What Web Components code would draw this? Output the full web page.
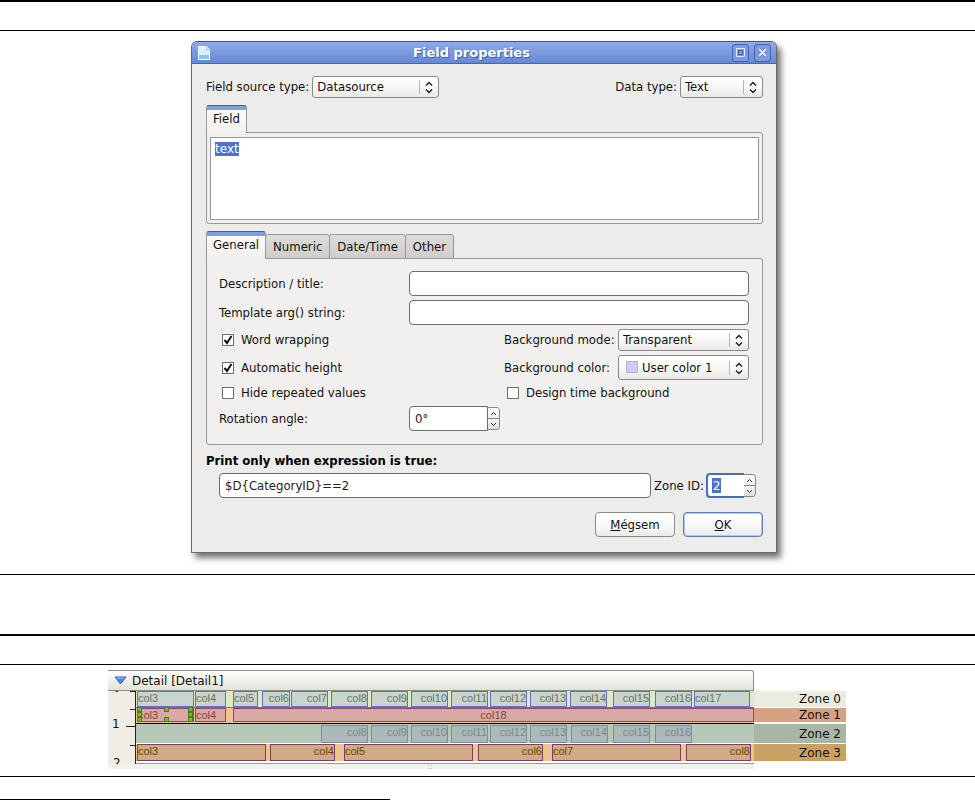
<!DOCTYPE html>
<html lang="en">
<head>
<meta charset="utf-8">
<title>Field properties</title>
<style>
	body {
		margin: 0;
		background: #fff;
		color: #111;
		font: 13px/16px "DejaVu Sans Condensed", "DejaVu Sans", sans-serif;
	}
	hr { width: 40%; height: 1px; margin: 22px 0 0; border: 0; background: #000; }
	doc-figure + doc-figure { margin-top: 59px; }
</style>
</head>
<body>
	<doc-figure><field-dialog></field-dialog></doc-figure>
	<doc-figure class="report"><report-band></report-band></doc-figure>
	<hr>

<script>
	/* Shared base: puts the markup of the class into an open shadow root */
	class BaseElement extends HTMLElement {
		connectedCallback() {
			if (this.shadowRoot) return;
			this.attachShadow({ mode: 'open' });
			this.shadowRoot.innerHTML = this.template();
			this.ready();
		}
		attr(name, def = '') { return this.getAttribute(name) ?? def; }
		ready() {}
	}

	// --- Figure between two rules ---
	class DocFigure extends BaseElement {
		template() {
			return `
				<style>
					:host { display: block; border-top: 2px solid #000; border-bottom: 1px solid #000; }
					.head { height: 28px; border-bottom: 1px solid #000; }
					.body { display: flex; justify-content: center; padding: 10px 7px 21px 0; }
					:host(.report) .body { padding: 5px 21px 7px 0; }
				</style>
				<div class="head"></div>
				<div class="body"><slot></slot></div>
			`;
		}
	}
	customElements.define('doc-figure', DocFigure);

	// --- Drop-down with its label ---
	class FieldSelect extends BaseElement {
		template() {
			const swatch = this.hasAttribute('swatch');
			return `
				<style>
					:host { display: flex; align-items: center; gap: 3px; }
					label { flex: 1 0 auto; white-space: nowrap; }
					.box { position: relative; display: flex; width: var(--select-width, 131px); }
					select {
						appearance: none;
						box-sizing: border-box;
						width: 100%;
						height: 22px;
						padding: 0 24px 0 4px;
						border: 1px solid #8c8a86;
						border-radius: 3px;
						background: linear-gradient(#fff, #f8f8f7 50%, #e9e8e6);
						font: inherit;
						color: inherit;
						outline: none;
					}
					:host([swatch]) select { height: 25px; padding-left: 23px; }
					svg { position: absolute; right: 0; top: 50%; margin-top: -11px; pointer-events: none; }
					.swatch {
						position: absolute;
						left: 8px;
						top: 6px;
						width: 12px;
						height: 12px;
						box-sizing: border-box;
						border: 1px solid #b4b4c8;
						background: #ccccfa;
						pointer-events: none;
					}
				</style>
				<label for="ctl">${this.attr('label')}</label>
				<div class="box">
					<select id="ctl"><option>${this.attr('value')}</option></select>
					${swatch ? '<span class="swatch"></span>' : ''}
					<svg width="20" height="22" viewBox="0 0 20 22" fill="none">
						<path d="M.5 4v14" stroke="#b8b6b2"/>
						<path d="M7 9.500l3-3 3 3M7 13.500l3 3 3-3" stroke="#222" stroke-width="1.500"/>
					</svg>
				</div>
			`;
		}
	}
	customElements.define('field-select', FieldSelect);

	// --- Text box with its label ---
	class FieldText extends BaseElement {
		template() {
			return `
				<style>
					:host { display: flex; align-items: center; }
					label { flex: none; width: 190px; white-space: nowrap; }
					:host([bare]) label { display: none; }
					input {
						flex: 1;
						min-width: 0;
						height: 25px;
						box-sizing: border-box;
						padding: 0 5px;
						border: 1px solid #6f6d6a;
						border-radius: 4px;
						background: #fff;
						font: inherit;
						color: #222;
						outline: none;
					}
				</style>
				<label for="ctl">${this.attr('label')}</label>
				<input id="ctl" type="text" value="${this.attr('value')}">
			`;
		}
	}
	customElements.define('field-text', FieldText);

	// --- Tick box ---
	class FieldCheck extends BaseElement {
		template() {
			return `
				<style>
					:host { display: flex; }
					label { display: flex; align-items: center; gap: 7px; padding-left: 3px; white-space: nowrap; }
					.box { display: grid; }
					.box > * { grid-area: 1 / 1; }
					input {
						appearance: none;
						width: 12px;
						height: 12px;
						box-sizing: border-box;
						margin: 0;
						border: 1px solid #6f6d6a;
						background: #fff;
					}
					svg { visibility: hidden; pointer-events: none; }
					input:checked + svg { visibility: visible; }
				</style>
				<label>
					<span class="box">
						<input type="checkbox" ${this.hasAttribute('checked') ? 'checked' : ''}>
						<svg width="12" height="12" viewBox="0 0 12 12"><path d="M2.500 6l2.500 3 4.500-7" fill="none" stroke="#111" stroke-width="2"/></svg>
					</span>
					<span><slot></slot></span>
				</label>
			`;
		}
	}
	customElements.define('field-check', FieldCheck);

	// --- Number box with up / down buttons ---
	class FieldSpin extends BaseElement {
		template() {
			return `
				<style>
					:host { display: flex; align-items: center; }
					label { flex: none; width: var(--label-width, 190px); white-space: nowrap; }
					input {
						width: var(--spin-width, 79px);
						height: 25px;
						box-sizing: border-box;
						padding: 0 5px;
						border: 1px solid #6f6d6a;
						border-radius: 4px 0 0 4px;
						background: #fff;
						font: inherit;
						color: #222;
						outline: none;
					}
					:host([selected]) input {
						border: 2px solid #4a6fb8;
						border-right-width: 0;
						color: #fff;
						background: linear-gradient(#4a74cc, #4a74cc) 4px 3px / 9px 15px no-repeat #fff;
					}
					.buttons {
						display: grid;
						width: 12px;
						height: 23px;
						box-sizing: border-box;
						border: 1px solid #8c8a86;
						border-left: 0;
						border-radius: 0 4px 4px 0;
						overflow: hidden;
					}
					button {
						display: grid;
						place-items: center;
						padding: 0;
						border: 0;
						background: linear-gradient(#fff, #ececea);
					}
					button + button { border-top: 1px solid #8c8a86; background: linear-gradient(#f4f4f2, #dddcd9); }
				</style>
				<label for="ctl">${this.attr('label')}</label>
				<input id="ctl" type="text" value="${this.attr('value')}">
				<div class="buttons">
					<button aria-label="Up"><svg width="7" height="5" viewBox="0 0 7 5"><path d="M1 4l2.500-2.500 2.500 2.500" fill="none" stroke="#333"/></svg></button>
					<button aria-label="Down"><svg width="7" height="5" viewBox="0 0 7 5"><path d="M1 1l2.500 2.500 2.500-2.500" fill="none" stroke="#333"/></svg></button>
				</div>
			`;
		}
		ready() {
			const input = this.shadowRoot.querySelector('input');
			const [up, down] = this.shadowRoot.querySelectorAll('button');
			const unit = this.attr('unit');
			const step = n => input.value = (parseInt(input.value) || 0) + n + unit;
			up.addEventListener('click', () => step(1));
			down.addEventListener('click', () => step(-1));
		}
	}
	customElements.define('field-spin', FieldSpin);

	// --- Tabs over one panel, tabs="A,B,C" ---
	class TabPanel extends BaseElement {
		template() {
			const tabs = this.attr('tabs').split(',');
			return `
				<style>
					:host { display: block; }
					.tabs { display: flex; align-items: flex-end; margin-bottom: -1px; position: relative; }
					button {
						height: 25px;
						box-sizing: border-box;
						margin-left: -1px;
						padding: 0 7px;
						border: 1px solid #9a9894;
						border-radius: 3px 3px 0 0;
						background: linear-gradient(#dddcda, #cfcecb);
						font: inherit;
						color: inherit;
					}
					button:first-child { margin-left: 0; }
					button[aria-selected=true] {
						height: 28px;
						padding: 0 6px 2px;
						border-top: 1px solid #3d5ea6;
						border-bottom: 0;
						background: linear-gradient(#7f9fe0 0 4px, #fbfbfa 4px, #f1f0ee);
					}
					.panel { border: 1px solid #9a9894; border-radius: 0 3px 3px 3px; background: #f1f0ee; }
				</style>
				<div class="tabs" role="tablist">
					${tabs.map((t, i) => `<button role="tab" aria-selected="${i === 0}">${t}</button>`).join('')}
				</div>
				<div class="panel" role="tabpanel"><slot></slot></div>
			`;
		}
		ready() {
			const tabs = this.shadowRoot.querySelectorAll('button');
			tabs.forEach(tab => tab.addEventListener('click', () => {
				tabs.forEach(t => t.setAttribute('aria-selected', t === tab));
			}));
		}
	}
	customElements.define('tab-panel', TabPanel);

	// --- Push button ---
	class PushButton extends BaseElement {
		template() {
			return `
				<style>
					:host { display: block; }
					button {
						width: 80px;
						height: 25px;
						box-sizing: border-box;
						padding: 0;
						border: 1px solid #8c8a86;
						border-radius: 4px;
						background: linear-gradient(#fff, #f9f9f8 50%, #eaeae8);
						font: inherit;
						color: inherit;
					}
					:host([default]) button { border-color: #5f80c0; box-shadow: inset 0 0 0 1px #b4c6ea; }
				</style>
				<button><slot></slot></button>
			`;
		}
	}
	customElements.define('push-button', PushButton);

	// --- The dialog window ---
	class FieldDialog extends BaseElement {
		template() {
			return `
				<style>
					:host {
						display: block;
						flex: 0 1 586px;
						box-sizing: border-box;
						border: 1px solid #66686c;
						border-top-color: #3b5690;
						border-radius: 6px 6px 0 0;
						background: #ececeb;
						box-shadow: 4px 5px 6px rgba(0, 0, 0, .55);
					}
					header {
						display: flex;
						align-items: center;
						gap: 5px;
						height: 22px;
						box-sizing: border-box;
						padding: 0 5px;
						border-bottom: 1px solid #4566b0;
						border-radius: 5px 5px 0 0;
						background: linear-gradient(#8eaae8, #6689d6);
					}
					h1 {
						flex: 1;
						margin: 0;
						font: bold 13px/20px "DejaVu Sans", sans-serif;
						text-align: center;
						color: #fff;
						text-shadow: 1px 1px 1px #3d5ea6;
					}
					header button {
						display: grid;
						place-items: center;
						width: 17px;
						height: 18px;
						padding: 0;
						border: 1px solid #3f61ac;
						border-radius: 3px;
						background: #7c9ade;
					}
					main { padding: 12px 13px 15px 14px; }
					.row { display: flex; align-items: center; justify-content: space-between; }
					.source { --select-width: 127px; }
					.type { --select-width: 83px; }
					tab-panel { margin-top: 7px; }
					textarea {
						display: block;
						width: calc(100% - 6px);
						height: 83px;
						box-sizing: border-box;
						margin: 4px 3px 3px;
						padding: 4px;
						border: 1px solid #9a9894;
						font: 12px/15px "DejaVu Sans", sans-serif;
						color: #fff;
						background: linear-gradient(#4a74cc, #4a74cc) 4px 4px / 24px 14px no-repeat #fff;
						outline: none;
						resize: none;
					}
					.form { display: grid; gap: 4px; padding: 12px 13px 13px 12px; }
					.pair { display: grid; grid-template-columns: 1fr 245px; align-items: center; }
					.pair:last-of-type { height: 18px; }
					h2 { margin: 8px 0 4px; font: inherit; font-weight: bold; color: #000; }
					.expression { display: flex; gap: 3px; padding: 0 7px 0 13px; }
					.expression field-text { flex: 1; }
					.zone { --label-width: 52px; --spin-width: 38px; }
					footer { display: flex; justify-content: flex-end; gap: 8px; margin-top: 14px; }
				</style>
				<header>
					<svg width="14" height="16" viewBox="0 0 14 16">
						<path d="M1.500 1.500h8l3 3v10h-11z" fill="#d8f0fc" stroke="#f2fbff"/>
						<path d="M9.500 1.500v3h3" fill="#fff" stroke="#8cc4e8"/>
						<path d="M2 10h10v2H2z" fill="#7cc8f0"/>
						<path d="M2 13h10" stroke="#3c9cd8"/>
					</svg>
					<h1>Field properties</h1>
					<button aria-label="Maximize">
						<svg width="9" height="9" viewBox="0 0 9 9" fill="none"><path d="M.5.5h8v8h-8z" stroke="#e4ecfc"/><path d="M2.500 2.500h4v4h-4z" stroke="#3f61ac"/></svg>
					</button>
					<button aria-label="Close">
						<svg width="9" height="9" viewBox="0 0 9 9"><path d="M1 1l7 7M8 1l-7 7" stroke="#3f61ac" stroke-width="3"/><path d="M1 1l7 7M8 1l-7 7" stroke="#e4ecfc" stroke-width="2"/></svg>
					</button>
				</header>
				<main>
					<div class="row">
						<field-select class="source" label="Field source type:" value="Datasource"></field-select>
						<field-select class="type" label="Data type:" value="Text"></field-select>
					</div>
					<tab-panel tabs="Field">
						<textarea aria-label="Field" spellcheck="false">text</textarea>
					</tab-panel>
					<tab-panel tabs="General,Numeric,Date/Time,Other">
						<div class="form">
							<field-text label="Description / title:"></field-text>
							<field-text label="Template arg() string:"></field-text>
							<div class="pair">
								<field-check checked>Word wrapping</field-check>
								<field-select label="Background mode:" value="Transparent"></field-select>
							</div>
							<div class="pair">
								<field-check checked>Automatic height</field-check>
								<field-select swatch label="Background color:" value="User color 1"></field-select>
							</div>
							<div class="pair">
								<field-check>Hide repeated values</field-check>
								<field-check>Design time background</field-check>
							</div>
							<field-spin label="Rotation angle:" value="0°" unit="°"></field-spin>
						</div>
					</tab-panel>
					<h2>Print only when expression is true:</h2>
					<div class="expression">
						<field-text bare label="Expression" value="$D{CategoryID}==2"></field-text>
						<field-spin class="zone" selected label="Zone ID:" value="2"></field-spin>
					</div>
					<footer>
						<push-button><u>M</u>égsem</push-button>
						<push-button default><u>O</u>K</push-button>
					</footer>
				</main>
			`;
		}
	}
	customElements.define('field-dialog', FieldDialog);

	// --- One zone of the band: items on a free canvas, name at the right ---
	class ReportZone extends BaseElement {
		template() {
			return `
				<style>
					:host { display: grid; grid-template-columns: 1fr 92px; height: var(--h); }
					.canvas { position: relative; border-bottom: 1px solid var(--edge); background: var(--bg); }
					.name {
						display: flex;
						align-items: center;
						justify-content: flex-end;
						padding-right: 5px;
						border-bottom: 1px solid #fff;
						background: var(--name-bg);
						font: 12px/14px "DejaVu Sans", sans-serif;
						color: #111;
					}
					.item {
						position: absolute;
						top: var(--top, 0);
						bottom: 0;
						box-sizing: border-box;
						border: 1px solid var(--line);
						background: var(--fill);
						font: 11px/12px "Liberation Sans", sans-serif;
						color: var(--ink);
						white-space: nowrap;
					}
					.l { text-align: left; }
					.r { text-align: right; }
					.c { text-align: center; }
					i {
						position: absolute;
						width: 5px;
						height: 5px;
						box-sizing: border-box;
						border: 1px solid #4c7c1c;
						background: #7cba2c;
					}
				</style>
				<div class="canvas"></div>
				<div class="name">${this.attr('name')}</div>
			`;
		}
		ready() {
			const canvas = this.shadowRoot.querySelector('.canvas');
			zones[this.attr('zone')].forEach(([name, x, w, align, selected]) => {
				const el = document.createElement('div');
				el.className = 'item ' + align;
				el.style.left = x + 'px';
				el.style.width = w + 'px';
				el.textContent = name;
				canvas.appendChild(el);
				if (selected)
					this.addHandles(canvas, x, w);
			});
		}
		// Grips on the sides and the middle of a selected item
		addHandles(canvas, x, w) {
			const mid = x + Math.round(w / 2) - 2;
			[[x, -1], [x, 4], [x, 9], [mid, -1], [mid, 9], [x + w - 6, -1], [x + w - 6, 4], [x + w - 6, 9]].forEach(([hx, hy]) => {
				const grip = document.createElement('i');
				grip.style.left = hx + 'px';
				grip.style.top = hy + 'px';
				canvas.appendChild(grip);
			});
		}
	}

	// name, x, width, align, selected
	const zones = [
		[
			['col3', 1, 57, 'l'], ['col4', 59, 31, 'l'], ['col5', 97, 25, 'l'], ['col6', 126, 28, 'r'],
			['col7', 155, 37, 'r'], ['col8', 195, 37, 'r'], ['col9', 235, 37, 'r'], ['col10', 275, 37, 'r'],
			['col11', 315, 37, 'r'], ['col12', 354, 37, 'r'], ['col13', 394, 37, 'r'], ['col14', 434, 37, 'r'],
			['col15', 477, 37, 'r'], ['col16', 519, 37, 'r'], ['col17', 558, 56, 'l']
		],
		[['col3', 1, 57, 'l', true], ['col4', 59, 31, 'l'], ['col18', 97, 521, 'c']],
		[
			['col8', 185, 47, 'r'], ['col9', 235, 37, 'r'], ['col10', 275, 37, 'r'], ['col11', 315, 37, 'r'],
			['col12', 354, 37, 'r'], ['col13', 394, 37, 'r'], ['col14', 435, 37, 'r'], ['col15', 477, 37, 'r'],
			['col16', 519, 37, 'r']
		],
		[
			['col3', 1, 129, 'l'], ['col4', 134, 65, 'r'], ['col5', 208, 129, 'l'],
			['col6', 342, 65, 'r'], ['col7', 416, 129, 'l'], ['col8', 550, 65, 'r']
		]
	];
	customElements.define('report-zone', ReportZone);

	// --- Detail band: title, ruler, zones ---
	class ReportBand extends BaseElement {
		template() {
			return `
				<style>
					:host { display: block; flex: 0 1 738px; min-width: 0; }
					header {
						display: flex;
						align-items: center;
						gap: 5px;
						height: 21px;
						box-sizing: border-box;
						margin-right: 92px;
						padding-left: 6px;
						border: 1px solid #8c8c80;
						border-left: 0;
						border-radius: 0 3px 0 0;
						background: linear-gradient(#fff, #e2e2d8);
						font: 12px/16px "DejaVu Sans", sans-serif;
					}
					.area { display: grid; grid-template-columns: 28px 1fr; }
					.ruler { overflow: hidden; height: 73px; background: #f1ece5; }
					.ruler svg { display: block; font: 12px "DejaVu Sans", sans-serif; }
					.z0 { --h: 17px; --bg: #dfe8c8; --edge: #6070c4; --fill: #c9d4cc; --line: #6070c4; --ink: #66775c; --name-bg: #e9ecdf; }
					.z1 { --h: 15px; --bg: #efc39a; --edge: #efc39a; --fill: #dba9a4; --line: #8c4470; --ink: #824a3c; --name-bg: #d6a284; }
					.z2 { --h: 20px; --top: 1px; --bg: #b8c8b8; --edge: #fff; --fill: #abb9b8; --line: #7a8cac; --ink: #7b8c84; --name-bg: #a9b6a6; }
					.z3 { --h: 18px; --bg: #eec48c; --edge: #fff; --fill: #cfab88; --line: #7a4060; --ink: #6e430c; --name-bg: #c9a165; }
					.cut { height: 1px; margin-right: 92px; background: #000; }
					.end { height: 2px; box-sizing: border-box; margin-right: 92px; border-bottom: 1px solid #999; }
					.split {
						display: flex;
						justify-content: center;
						height: 5px;
						margin-right: 92px;
						background: #f4f0ea;
					}
				</style>
				<header>
					<svg width="13" height="9" viewBox="0 0 13 9"><path d="M1 1h11l-5.500 7z" fill="#4c8ce0" stroke="#2c5cb0"/><path d="M2.500 2h8" stroke="#9cc4f4"/></svg>
					<span>Detail [Detail1]</span>
				</header>
				<div class="area">
					<div class="ruler">
						<svg width="28" height="73" viewBox="0 0 28 73">
							<path d="M22 .5h6M22 18.500h6M18 35.500h10M22 54.500h6M27.500 0v73" stroke="#222"/>
							<text x="5" y="1" fill="#111">0</text>
							<text x="4" y="37" fill="#111">1</text>
							<text x="5" y="76" fill="#111">2</text>
						</svg>
					</div>
					<div class="zones">
						<report-zone class="z0" zone="0" name="Zone 0"></report-zone>
						<report-zone class="z1" zone="1" name="Zone 1"></report-zone>
						<div class="cut"></div>
						<report-zone class="z2" zone="2" name="Zone 2"></report-zone>
						<report-zone class="z3" zone="3" name="Zone 3"></report-zone>
						<div class="end"></div>
					</div>
				</div>
				<div class="split">
					<svg width="6" height="5" viewBox="0 0 6 5" fill="#b8b4ac"><path d="M0 1h1v1H0zM3 1h1v1H3zM0 4h1v1H0zM3 4h1v1H3z"/></svg>
				</div>
			`;
		}
	}
	customElements.define('report-band', ReportBand);
</script>
</body>
</html>
